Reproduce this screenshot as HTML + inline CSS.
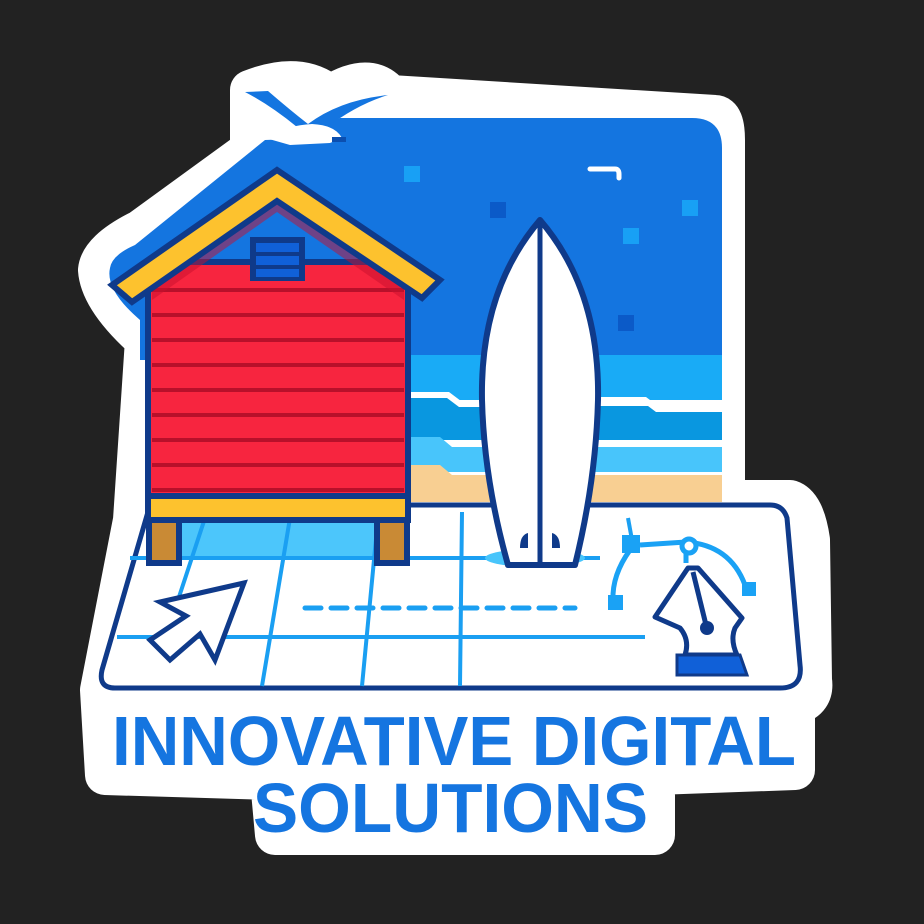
<!DOCTYPE html>
<html><head><meta charset="utf-8"><style>
html,body{margin:0;padding:0;background:#222222;}
svg{display:block;}
</style></head><body>
<svg width="924" height="924" viewBox="0 0 924 924" xmlns="http://www.w3.org/2000/svg">
<rect width="924" height="924" fill="#222222"/>
<g fill="#ffffff" stroke="#ffffff" stroke-linejoin="round" stroke-width="40">
  <path d="M250 90 Q300 70 330 95 Q370 70 390 95 L715 115 Q725 115 725 140 L725 500 L790 500 Q805 505 810 540 L812 680 Q815 700 795 705 L795 770 L655 775 L655 835 L275 835 L270 780 L105 775 L100 690 L133 520 L145 340 Q100 300 98 270 Q100 250 140 230 L250 150 Z"/>
</g>
<path d="M340 118 L692 118 Q722 118 722 148 L722 360 L140 360 L140 320 Q105 290 110 268 Q112 255 135 245 L265 140 Q300 140 340 118 Z" fill="#1475e0"/>
<rect x="404" y="166" width="16" height="16" fill="#18a0f5"/>
<rect x="490" y="202" width="16" height="16" fill="#0b5ac8"/>
<rect x="682" y="200" width="16" height="16" fill="#18a0f5"/>
<rect x="623" y="228" width="16" height="16" fill="#18a0f5"/>
<rect x="618" y="315" width="16" height="16" fill="#0b5ac8"/>
<path d="M590 169 L615 169 Q619 169 619 174 L619 178" stroke="#fff" stroke-width="5" fill="none" stroke-linecap="round"/>
<rect x="405" y="355" width="317" height="45" fill="#19abf6"/>
<path d="M405 397 L450 397 L462 406 L722 406 L722 440 L405 440 Z" fill="#0997e0"/>
<path d="M405 395 L448 395 L460 404 L480 404 M600 400 L645 400 L657 409 L722 409" stroke="#fff" stroke-width="6" fill="none"/>
<path d="M405 437 L440 437 L452 447 L722 447 L722 472 L405 472 Z" fill="#48c5fb"/>
<path d="M405 465 L440 465 L452 475 L722 475 L722 502 L405 502 Z" fill="#f8cf92"/>
<path d="M245 92 L268 91 Q290 110 308 124 Q340 100 388 95 Q355 105 322 131 L280 137 L297 127 Q270 105 245 92 Z" fill="#1475e0"/>
<path d="M262 137 Q290 125 312 124 Q335 125 342 138 L330 143 L290 145 Z" fill="#fff"/>
<rect x="332" y="137" width="14" height="5" fill="#0b4fb0"/>
<path d="M150 505 L770 505 Q783 505 787 518 L800 665 Q803 688 780 688 L115 688 Q98 688 102 670 L150 505 Z" fill="#fff" stroke="#0f3a8a" stroke-width="5" stroke-linejoin="round"/>
<rect x="152" y="518" width="250" height="42" fill="#4cc6fb"/>
<g stroke="#1a9ff2" stroke-width="4" fill="none">
  <path d="M130 558 L505 558 M575 558 L600 558"/>
  <path d="M117 637 L645 637"/>
  <path d="M205 518 L178 600 M290 518 L262 686 M378 518 L362 686 M462 512 L460 686"/>
  <path d="M305 608 L575 608" stroke-dasharray="16 10" stroke-linecap="round" stroke-width="5"/>
  <path d="M628 518 L632 540"/>
</g>
<g stroke="#1aa2f5" stroke-width="5" fill="none">
  <path d="M640 545 L686 542 Q730 545 745 585"/>
  <path d="M630 550 Q612 575 613 600"/>
  <path d="M686 545 L686 563"/>
</g>
<rect x="622" y="535" width="18" height="18" fill="#1aa2f5"/>
<rect x="608" y="595" width="15" height="15" fill="#1aa2f5"/>
<rect x="742" y="582" width="14" height="14" fill="#1aa2f5"/>
<circle cx="689" cy="546" r="7" fill="#fff" stroke="#1aa2f5" stroke-width="5"/>
<path d="M688 568 L698 568 L742 618 L735 628 Q730 640 737 655 L685 655 Q690 640 680 628 L655 617 Z" fill="#fff" stroke="#0f3a8a" stroke-width="5" stroke-linejoin="round"/>
<path d="M693 572 L706 625" stroke="#0f3a8a" stroke-width="5"/>
<circle cx="707" cy="628" r="7" fill="#0f3a8a"/>
<path d="M677 655 L740 655 L747 675 L677 675 Z" fill="#1060d8" stroke="#0f3a8a" stroke-width="3"/>
<path d="M244 583 L160 602 L186 616 L150 640 L170 660 L200 634 L215 660 Z" fill="#fff" stroke="#0f3a8a" stroke-width="5" stroke-linejoin="miter"/>
<ellipse cx="535" cy="558" rx="50" ry="9" fill="#48c5fb"/>
<path d="M540 220 Q600 290 598 400 Q596 480 575 565 L508 565 Q484 480 482 400 Q480 290 540 220 Z" fill="#fff" stroke="#0f3a8a" stroke-width="6" stroke-linejoin="round"/>
<path d="M540 222 L540 565" stroke="#0f3a8a" stroke-width="5"/>
<path d="M520 548 Q520 535 528 533 L528 548 Z M552 533 Q560 535 560 548 L552 548 Z" fill="#0f3a8a"/>
<rect x="148" y="262" width="260" height="238" fill="#f7253f" stroke="#0f3a8a" stroke-width="6"/>
<g stroke="#b8102a" stroke-width="4">
  <path d="M152 290 L404 290 M152 315 L404 315 M152 340 L404 340 M152 365 L404 365 M152 390 L404 390 M152 415 L404 415 M152 440 L404 440 M152 465 L404 465 M152 490 L404 490"/>
</g>
<path d="M152 300 L277 212 L404 300 L404 270 L277 185 L152 270 Z" fill="#c8102e" opacity="0.5"/>
<path d="M277 170 L440 280 L422 298 L277 201 L132 302 L112 285 Z" fill="#fdc22e" stroke="#0f3a8a" stroke-width="6" stroke-linejoin="miter"/>
<rect x="250" y="237" width="55" height="44" fill="#0f3a8a"/>
<rect x="256" y="243" width="43" height="9" fill="#1060d8"/>
<rect x="256" y="256" width="43" height="9" fill="#1060d8"/>
<rect x="256" y="269" width="43" height="8" fill="#1060d8"/>
<rect x="148" y="496" width="260" height="24" fill="#fdc22e" stroke="#0f3a8a" stroke-width="6"/>
<rect x="149" y="520" width="30" height="43" fill="#c98a35" stroke="#0f3a8a" stroke-width="6"/>
<rect x="377" y="520" width="30" height="43" fill="#c98a35" stroke="#0f3a8a" stroke-width="6"/>
<g font-family="Liberation Sans, sans-serif" font-weight="bold" fill="#1575e0" font-size="70">
  <text x="112" y="765" textLength="684" lengthAdjust="spacingAndGlyphs">INNOVATIVE DIGITAL</text>
  <text x="253" y="832" textLength="395" lengthAdjust="spacingAndGlyphs">SOLUTIONS</text>
</g>
</svg>
</body></html>
